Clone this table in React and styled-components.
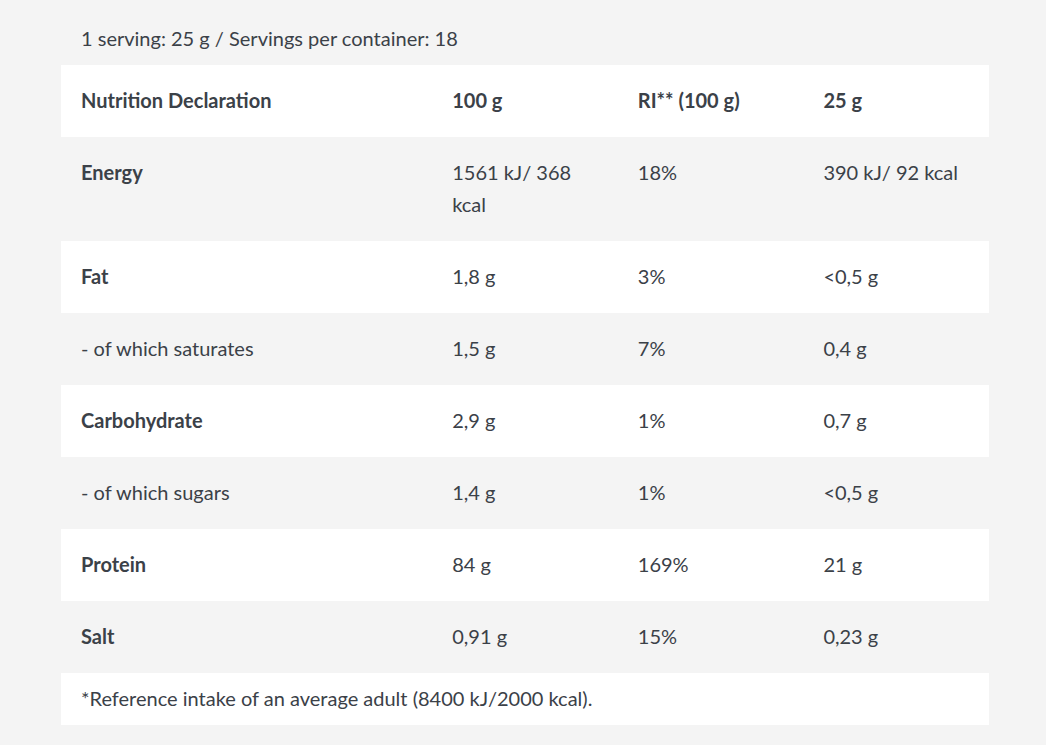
import React from "react";
import styled, { createGlobalStyle } from "styled-components";

const Global = createGlobalStyle`
  html, body { margin: 0; padding: 0; background: #f4f4f4; }
  body { font-family: Lato, "Open Sans", sans-serif; color: #3b4148; }
`;

const Page = styled.div`
  padding: 18px 57px 20px 61px;
`;

const Serving = styled.p`
  margin: 0 0 11px;
  padding: 4px 20px 0;
  font-size: 20px;
  line-height: 32px;
`;

const Table = styled.table`
  width: 928px;
  border-collapse: collapse;
  table-layout: fixed;
  font-size: 20px;
  line-height: 32px;
`;

const Row = styled.tr`
  background: ${(p) => (p.$white ? "#ffffff" : "transparent")};
`;

const Cell = styled.td`
  padding: 19px 20px 21px;
  vertical-align: top;
  text-align: left;
  font-weight: ${(p) => (p.$bold ? 700 : 400)};
`;

const Note = styled.td`
  padding: 9px 20px 11px;
`;

const rows = [
  ["Energy", "1561 kJ/ 368 kcal", "18%", "390 kJ/ 92 kcal", true],
  ["Fat", "1,8 g", "3%", "<0,5 g", true],
  ["- of which saturates", "1,5 g", "7%", "0,4 g", false],
  ["Carbohydrate", "2,9 g", "1%", "0,7 g", true],
  ["- of which sugars", "1,4 g", "1%", "<0,5 g", false],
  ["Protein", "84 g", "169%", "21 g", true],
  ["Salt", "0,91 g", "15%", "0,23 g", true],
];

export default function App() {
  return (
    <>
      <Global />
      <Page>
        <Serving>1 serving: 25 g / Servings per container: 18</Serving>
        <Table>
          <colgroup>
            <col style={{ width: "40%" }} />
            <col style={{ width: "20%" }} />
            <col style={{ width: "20%" }} />
            <col style={{ width: "20%" }} />
          </colgroup>
          <tbody>
            <Row $white>
              <Cell $bold>Nutrition Declaration</Cell>
              <Cell $bold>100 g</Cell>
              <Cell $bold>RI** (100 g)</Cell>
              <Cell $bold>25 g</Cell>
            </Row>
            {rows.map((r, i) => (
              <Row key={r[0]} $white={i % 2 === 1}>
                <Cell $bold={r[4]}>{r[0]}</Cell>
                <Cell>{r[1]}</Cell>
                <Cell>{r[2]}</Cell>
                <Cell>{r[3]}</Cell>
              </Row>
            ))}
            <Row $white>
              <Note colSpan={4}>
                *Reference intake of an average adult (8400 kJ/2000 kcal).
              </Note>
            </Row>
          </tbody>
        </Table>
      </Page>
    </>
  );
}
